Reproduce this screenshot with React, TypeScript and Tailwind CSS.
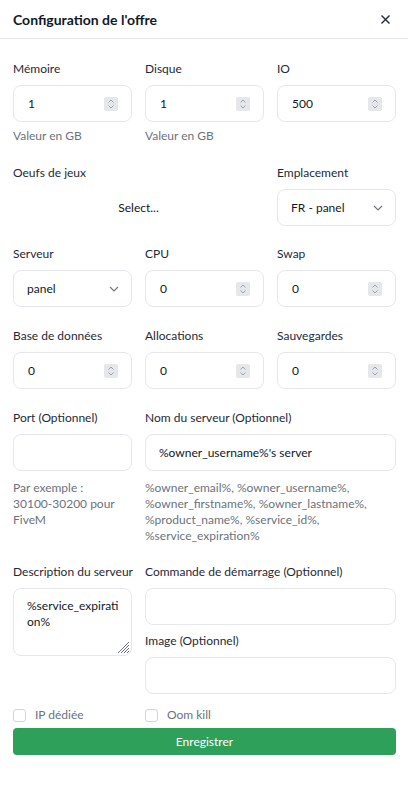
import React from "react";

const Spinner = () => (
  <div className="w-[14px] h-[14px] bg-[#e5e7eb] rounded-[2px] flex items-center justify-center">
    <svg width="8" height="10" viewBox="0 0 8 10" fill="none" stroke="#9ca3af" strokeWidth="1">
      <path d="M1.5 3.5 L4 1 L6.5 3.5" />
      <path d="M1.5 6.5 L4 9 L6.5 6.5" />
    </svg>
  </div>
);

const Chevron = () => (
  <svg width="10" height="6" viewBox="0 0 10 6" fill="none" stroke="#6b7280" strokeWidth="1.1">
    <path d="M1 1 L5 5 L9 1" />
  </svg>
);

const Label = ({ children }: { children: React.ReactNode }) => (
  <div className="text-[12px] leading-4 text-[#1f2937] mb-[8px] whitespace-nowrap">{children}</div>
);

const NumInput = ({ value }: { value: string }) => (
  <div className="h-[37px] border border-[#e5e7eb] rounded-[8px] flex items-center pl-[14px] pr-[13px] justify-between">
    <span className="text-[12px] text-[#111827]">{value}</span>
    <Spinner />
  </div>
);

const SelectBox = ({ value }: { value: string }) => (
  <div className="h-[37px] border border-[#e5e7eb] rounded-[8px] flex items-center pl-[13px] pr-[12px] justify-between">
    <span className="text-[12px] text-[#111827]">{value}</span>
    <Chevron />
  </div>
);

const TextBox = ({ value }: { value?: string }) => (
  <div className="h-[37px] border border-[#e5e7eb] rounded-[8px] flex items-center px-[13px]">
    <span className="text-[12px] text-[#111827]">{value}</span>
  </div>
);

const Check = ({ label }: { label: string }) => (
  <div className="flex items-center gap-[9px]">
    <div className="w-[13px] h-[13px] border border-[#d1d5db] rounded-[3px] bg-white" />
    <span className="text-[12px] text-[#6b7280]">{label}</span>
  </div>
);

export default function App() {
  return (
    <div className="w-[408px] h-[797px] bg-white" style={{ fontFamily: '"Lato", "Liberation Sans", sans-serif' }}>
      <div className="h-[39px] border-b border-[#e5e7eb] flex items-center justify-between pl-[13px] pr-[18px]">
        <span className="text-[14px] font-bold text-[#111827]">Configuration de l'offre</span>
        <svg width="9" height="9" viewBox="0 0 9 9" stroke="#1f2937" strokeWidth="1.4">
          <path d="M0.5 0.5 L8.5 8.5 M8.5 0.5 L0.5 8.5" />
        </svg>
      </div>

      <div className="pl-[13px] pr-[12px] pt-[22px] flex flex-col">
        <div className="grid grid-cols-3 gap-x-[13px]">
          <div>
            <Label>Mémoire</Label>
            <NumInput value="1" />
            <div className="text-[12px] leading-[16px] text-[#6b7280] mt-[6px]">Valeur en GB</div>
          </div>
          <div>
            <Label>Disque</Label>
            <NumInput value="1" />
            <div className="text-[12px] leading-[16px] text-[#6b7280] mt-[6px]">Valeur en GB</div>
          </div>
          <div>
            <Label>IO</Label>
            <NumInput value="500" />
          </div>
        </div>

        <div className="grid grid-cols-3 gap-x-[13px] mt-[21px]">
          <div className="col-span-2 flex flex-col">
            <Label>Oeufs de jeux</Label>
            <div className="flex-1 flex items-center justify-center">
              <span className="text-[12px] text-[#111827]">Select...</span>
            </div>
          </div>
          <div>
            <Label>Emplacement</Label>
            <SelectBox value="FR - panel" />
          </div>
        </div>

        <div className="grid grid-cols-3 gap-x-[13px] mt-[20px]">
          <div>
            <Label>Serveur</Label>
            <SelectBox value="panel" />
          </div>
          <div>
            <Label>CPU</Label>
            <NumInput value="0" />
          </div>
          <div>
            <Label>Swap</Label>
            <NumInput value="0" />
          </div>
        </div>

        <div className="grid grid-cols-3 gap-x-[13px] mt-[21px]">
          <div>
            <Label>Base de données</Label>
            <NumInput value="0" />
          </div>
          <div>
            <Label>Allocations</Label>
            <NumInput value="0" />
          </div>
          <div>
            <Label>Sauvegardes</Label>
            <NumInput value="0" />
          </div>
        </div>

        <div className="grid grid-cols-3 gap-x-[13px] mt-[21px]">
          <div>
            <Label>Port (Optionnel)</Label>
            <TextBox />
            <div className="text-[12px] leading-[16px] text-[#6b7280] mt-[9px]">
              Par exemple :<br />30100-30200 pour<br />FiveM
            </div>
          </div>
          <div className="col-span-2">
            <Label>Nom du serveur (Optionnel)</Label>
            <TextBox value="%owner_username%'s server" />
            <div className="text-[12px] leading-[16px] text-[#6b7280] mt-[9px]">
              %owner_email%, %owner_username%,<br />
              %owner_firstname%, %owner_lastname%,<br />
              %product_name%, %service_id%,<br />
              %service_expiration%
            </div>
          </div>
        </div>

        <div className="grid grid-cols-3 gap-x-[13px] mt-[20px]">
          <div>
            <Label>Description du serveur</Label>
            <div className="relative h-[68px] border border-[#e5e7eb] rounded-[8px] pl-[13px] pr-[8px] pt-[9px]">
              <div className="text-[12px] leading-[16px] text-[#111827] break-all">%service_expiration%</div>
              <svg className="absolute right-[1px] bottom-[1px]" width="14" height="14" viewBox="0 0 14 14" stroke="#6b7280" strokeWidth="1">
                <path d="M13 2 L2 13 M13 5 L5 13 M13 8 L8 13 M13 11 L11 13" />
              </svg>
            </div>
          </div>
          <div className="col-span-2">
            <Label>Commande de démarrage (Optionnel)</Label>
            <TextBox />
            <div className="mt-[8px]">
              <Label>Image (Optionnel)</Label>
              <TextBox />
            </div>
          </div>
        </div>

        <div className="grid grid-cols-3 gap-x-[13px] mt-[12px]">
          <Check label="IP dédiée" />
          <Check label="Oom kill" />
        </div>

        <button className="mt-[4px] h-[27px] w-full rounded-[4px] bg-[#2ea05a] text-white text-[12px]">
          Enregistrer
        </button>
      </div>
    </div>
  );
}
